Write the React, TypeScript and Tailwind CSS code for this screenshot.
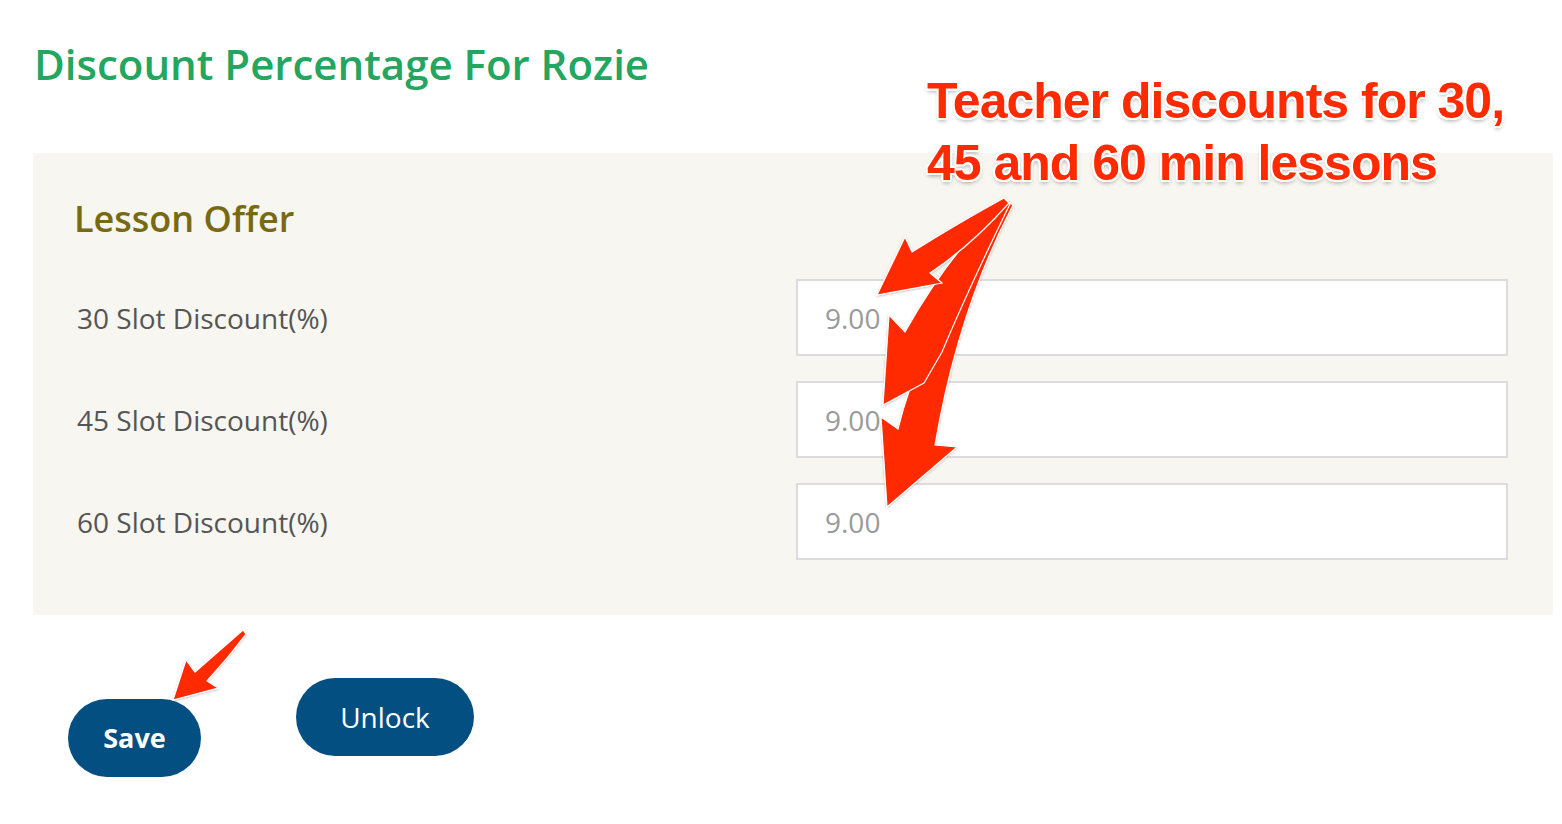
import React from "react";

const rows = ["30", "45", "60"];

function Arrows() {
  return (
    <svg
      className="absolute left-0 top-0 pointer-events-none"
      width="1562"
      height="824"
      viewBox="0 0 1562 824"
    >
      <defs>
        <filter id="sh" x="-20%" y="-20%" width="140%" height="140%">
          <feDropShadow dx="0" dy="1" stdDeviation="1.2" floodColor="#000" floodOpacity="0.25" />
        </filter>
      </defs>
      <g fill="#ff2a00" stroke="#ffffff" strokeWidth="1.2" strokeLinejoin="miter" filter="url(#sh)">
        {/* arrow 3 (bottom) */}
        <path d="M887 507 L881 417 L898 429 Q922 330 1008 202 L1013 205 Q958 310 935 445 L957 447 Z" />
        {/* arrow 2 (middle) */}
        <path d="M883 405 L889 315 L905 332 Q948 255 1005 200 L1010 204 Q968 290 942 352 L924 383 Z" />
        {/* arrow 1 (top) */}
        <path d="M877 295 L905 237 L912 252 Q960 222 1004 198 L1009 203 Q972 245 930 273 L942 283 Z" />
        {/* save arrow */}
        <path d="M173 700 L186 660 L195 672 Q220 650 243 630 L246 634 Q228 658 207 681 L218 688 Z" />
      </g>
    </svg>
  );
}

export default function App() {
  return (
    <div
      className="relative w-[1562px] h-[824px] bg-white overflow-hidden"
      style={{ fontFamily: '"Open Sans", "Noto Sans", sans-serif' }}
    >
      <div className="pl-[33px] pr-[9px] pt-[38px]">
        <h1 className="text-[42px] leading-[52px] font-semibold text-[#22a660] pl-[1px]">
          Discount Percentage For Rozie
        </h1>

        <div className="mt-[63px] bg-[#f7f6f0] pl-[41px] pr-[45px] pt-[44px] pb-[55px]">
          <h2 className="text-[36px] leading-[44px] font-semibold text-[#776a12]">
            Lesson Offer
          </h2>
          <div className="mt-[38px] flex flex-col gap-[25px]">
            {rows.map((r) => (
              <div key={r} className="flex items-center">
                <div className="w-[722px] pl-[3px] text-[28px] text-[#555555]">
                  {r} Slot Discount(%)
                </div>
                <div className="flex-1 h-[77px] bg-white border-2 border-[#dcdcdc] flex items-center pl-[27px] text-[28px] text-[#9a9a9a]">
                  9.00
                </div>
              </div>
            ))}
          </div>
        </div>

        <div className="flex items-start pl-[35px] mt-[63px] gap-[95px]">
          <button className="mt-[21px] w-[133px] h-[78px] rounded-full bg-[#034f82] text-white text-[27px] font-bold">
            Save
          </button>
          <button className="w-[178px] h-[78px] rounded-full bg-[#034f82] text-white text-[28px]">
            Unlock
          </button>
        </div>
      </div>

      <div
        className="absolute left-[927px] top-[70px] text-[#ff2a00] text-[50px] leading-[62px] font-bold tracking-[-1px]"
        style={{
          fontFamily: '"Liberation Sans", Arial, sans-serif',
          textShadow:
            "2px 0 0 #fff, -2px 0 0 #fff, 0 2px 0 #fff, 0 -2px 0 #fff, 1.5px 1.5px 0 #fff, -1.5px -1.5px 0 #fff, 1.5px -1.5px 0 #fff, -1.5px 1.5px 0 #fff, 0 3px 4px rgba(0,0,0,0.35)",
        }}
      >
        <div>Teacher discounts for 30,</div>
        <div>45 and 60 min lessons</div>
      </div>

      <Arrows />
    </div>
  );
}
